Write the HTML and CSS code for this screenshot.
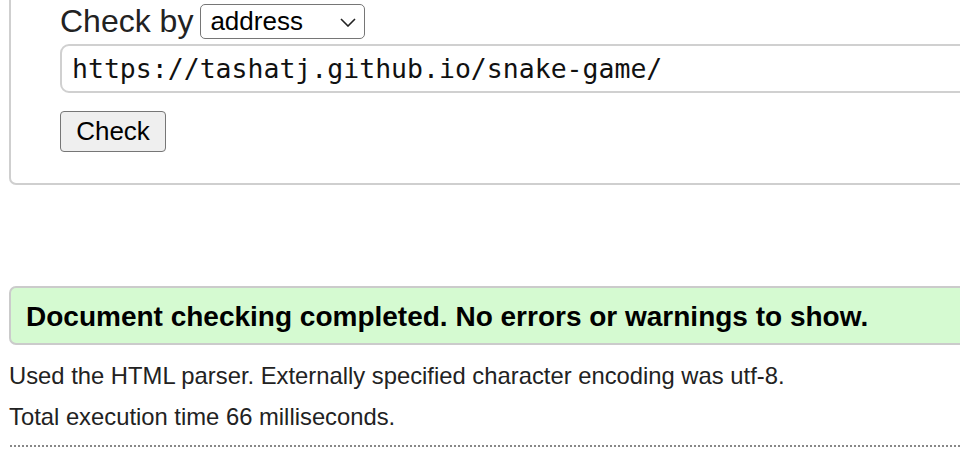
FILE: index.html
```html
<!DOCTYPE html>
<html lang="en">
<head>
<meta charset="utf-8">
<title>Nu Html Checker</title>
<link rel="stylesheet" href="styles.css">
</head>
<body>
<div class="page">
  <form class="checker">
    <div class="row-by">
      <label class="by-label" for="docselect">Check by</label>
      <span class="select-wrap">
        <select id="docselect" class="by-select">
          <option>address</option>
        </select>
        <svg class="chev" width="16" height="9" viewBox="0 0 16 9"><path d="M1 1 L8 8 L15 1" fill="none" stroke="#222" stroke-width="1.6"/></svg>
      </span>
    </div>
    <input class="url" type="text" value="https://tashatj.github.io/snake-game/">
    <div class="row-btn"><button type="button" class="check-btn">Check</button></div>
  </form>

  <div class="success">Document checking completed. No errors or warnings to show.</div>

  <p class="details">Used the HTML parser. Externally specified character encoding was utf-8.</p>
  <p class="details">Total execution time 66 milliseconds.</p>
  <hr class="dots">
</div>
</body>
</html>
```

FILE: styles.css
```css
html, body {
  margin: 0;
  padding: 0;
  background: #fff;
  overflow: hidden;
}
body {
  font-family: "Liberation Sans", Arial, sans-serif;
  color: #222;
}
.page {
  width: 1100px;
  padding-left: 9px;
}
.checker {
  margin: -30px 0 0 0;
  padding: 32px 0 31px 49px;
  border: 2px solid #cfcfcf;
  border-radius: 7px;
}
.row-by {
  display: flex;
  align-items: center;
  gap: 7px;
  height: 34px;
}
.by-label {
  font-size: 32px;
  line-height: 34px;
  color: #222;
}
.select-wrap {
  display: flex;
  align-items: center;
  position: relative;
}
.by-select {
  appearance: none;
  -webkit-appearance: none;
  width: 165px;
  height: 35px;
  border: 1.5px solid #767676;
  border-radius: 5px;
  background: #fff;
  font-family: "Liberation Sans", Arial, sans-serif;
  font-size: 26px;
  color: #000;
  padding: 0 0 0 9px;
  margin: 0;
}
.chev {
  position: absolute;
  right: 9px;
  top: 14px;
  pointer-events: none;
}
.url {
  display: block;
  box-sizing: border-box;
  margin: 6px 0 0 0;
  width: 1000px;
  height: 49px;
  border: 2px solid #d0d0d0;
  border-radius: 9px;
  padding: 0 0 0 10px;
  font-family: "DejaVu Sans Mono", Menlo, monospace;
  font-size: 26.5px;
  color: #111;
  background: #fff;
  outline: none;
}
.row-btn {
  margin-top: 18px;
}
.check-btn {
  box-sizing: border-box;
  height: 41px;
  width: 106px;
  padding: 0;
  border: 1.5px solid #767676;
  border-radius: 4px;
  background: #efefef;
  font-family: "Liberation Sans", Arial, sans-serif;
  font-size: 26px;
  color: #000;
}
.success {
  margin-top: 101px;
  height: 55px;
  border: 2px solid #cbcbcb;
  border-radius: 7px;
  background: #d5fad1;
  padding-left: 15px;
  font-weight: bold;
  font-size: 28px;
  line-height: 57px;
  color: #000;
}
.details {
  margin: 0;
  font-size: 23.8px;
  line-height: 28px;
  color: #222;
}
.success + .details {
  margin-top: 17px;
}
.details + .details {
  margin-top: 13px;
}
.dots {
  margin: 14px 0 0 1px;
  width: 950px;
  height: 0;
  border: none;
  border-top: 2px dotted #888;
}
```
